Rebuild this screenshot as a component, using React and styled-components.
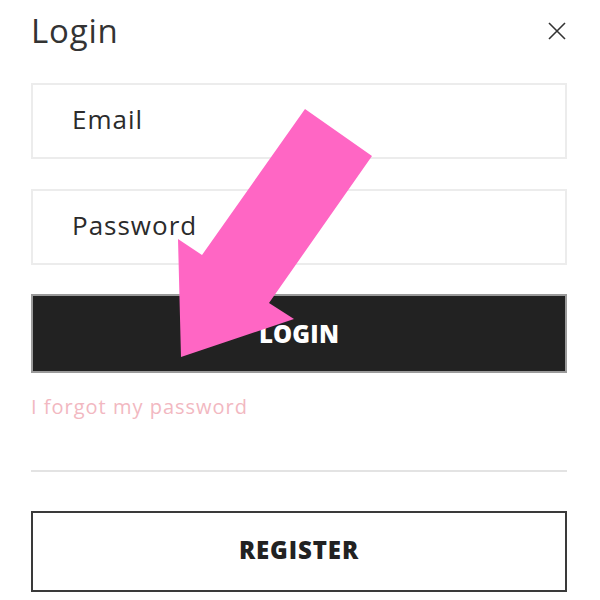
import React from "react";
import styled, { createGlobalStyle } from "styled-components";

const Global = createGlobalStyle`
body{
margin:0;
background:#fff;
font-family:"Open Sans","Liberation Sans",sans-serif;
color:#2b2b2b;
}
`
const Page = styled.div`
position:relative;
width:600px;
height:600px;
overflow:hidden;
`
const Panel = styled.div`
width:536px;
padding:0 33px 0 31px;
display:flex;
flex-direction:column;
`
const Header = styled.div`
height:62px;
display:flex;
align-items:center;
justify-content:space-between;
`
const Title = styled.h1`
margin:0;
font-size:33px;
font-weight:400;
color:#333;
letter-spacing:0.8px;
line-height:40px;
`
const Close = styled.button`
border:none;
background:transparent;
padding:0;
width:20px;
height:20px;
display:flex;
align-items:center;
justify-content:center;
cursor:pointer;
`
const Field = styled.div`
box-sizing:border-box;
height:76px;
margin-top:${p => p.top}px;
border:2px solid #ececec;
display:flex;
align-items:center;
padding:0 0 5px 39px;
font-size:26px;
letter-spacing:1px;
color:#2b2b2b;
`
const Button = styled.button`
box-sizing:border-box;
width:100%;
height:${p => p.h}px;
margin-top:${p => p.top}px;
padding:0 0 ${p => p.dark ? 1 : 4}px;
background:${p => p.dark ? "#222" : "#fff"};
color:${p => p.dark ? "#fff" : "#222"};
border:2px solid ${p => p.dark ? "#9a9a9a" : "#3a3a3a"};
font-family:"Open Sans","Liberation Sans",sans-serif;
font-weight:800;
font-size:24px;
letter-spacing:${p => p.dark ? 0.2 : 0.9}px;
cursor:pointer;
`
const Forgot = styled.a`
margin-top:22px;
font-size:20px;
letter-spacing:1px;
color:#f2b8c1;
line-height:24px;
text-decoration:none;
`
const Divider = styled.hr`
margin:51px 0 0;
border:none;
border-top:2px solid #e3e3e3;
`
const Arrow = styled.svg`
position:absolute;
left:0;
top:0;
pointer-events:none;
`

const App = () => {
  return (
    <Page>
      <Global />
      <Panel>
        <Header>
          <Title>Login</Title>
          <Close aria-label="close">
            <svg width="18" height="18" viewBox="0 0 18 18">
              <path d="M1 1L17 17M17 1L1 17" stroke="#333" strokeWidth="1.6" fill="none" />
            </svg>
          </Close>
        </Header>
        <Field top={21}>Email</Field>
        <Field top={30}>Password</Field>
        <Button dark h={79} top={29}>LOGIN</Button>
        <Forgot href="#">I forgot my password</Forgot>
        <Divider />
        <Button h={81} top={39}>REGISTER</Button>
      </Panel>
      <Arrow width="600" height="600">
        <polygon
          points="305,109 372,156 269,303 294,319 181,357 178,239 202,255"
          fill="#ff66c4"
        />
      </Arrow>
    </Page>
  );
};

export default App;
